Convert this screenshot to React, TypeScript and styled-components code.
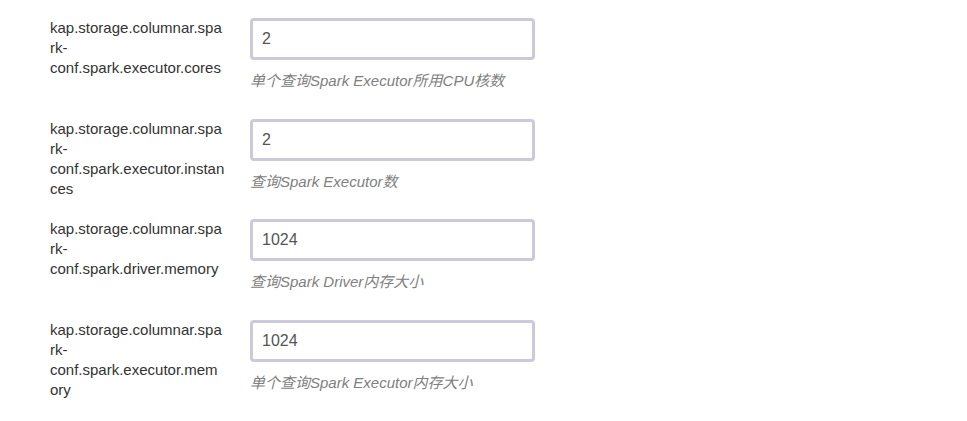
import React from "react";
import styled, { createGlobalStyle } from "styled-components";

const Global = createGlobalStyle`
  html, body { margin: 0; padding: 0; background: #fff; }
  body { font-family: "Liberation Sans", Arial, sans-serif; }
`;

const Form = styled.div`
  display: flex;
  flex-direction: column;
  padding: 18px 0 0 50px;
`;

const Row = styled.div`
  display: flex;
  align-items: flex-start;
  height: 100.5px;
`;

const Label = styled.div`
  width: 175px;
  margin-right: 25px;
  font-size: 15px;
  line-height: 20px;
  color: #333;
  word-break: break-all;
`;

const Field = styled.div`
  display: flex;
  flex-direction: column;
`;

const Input = styled.input`
  box-sizing: border-box;
  width: 285px;
  height: 42px;
  border: 3px solid #cbc9da;
  border-radius: 4px;
  padding: 0 9px;
  font-family: "Liberation Sans", Arial, sans-serif;
  font-size: 16px;
  color: #555;
  outline: none;
  background: #fff;
`;

const Help = styled.div`
  margin-top: 11px;
  font-size: 15px;
  line-height: 20px;
  font-style: italic;
  color: #808080;
  font-family: "Liberation Sans", Arial, "Noto Sans CJK SC", sans-serif;
`;

const rows = [
  { label: "kap.storage.columnar.spark-conf.spark.executor.cores", value: "2", help: "单个查询Spark Executor所用CPU核数" },
  { label: "kap.storage.columnar.spark-conf.spark.executor.instances", value: "2", help: "查询Spark Executor数" },
  { label: "kap.storage.columnar.spark-conf.spark.driver.memory", value: "1024", help: "查询Spark Driver内存大小" },
  { label: "kap.storage.columnar.spark-conf.spark.executor.memory", value: "1024", help: "单个查询Spark Executor内存大小" },
];

function renderLabel(l: string) {
  const i = l.indexOf("-");
  return (
    <>
      {l.slice(0, i + 1)}
      <br />
      {l.slice(i + 1)}
    </>
  );
}

export default function App() {
  return (
    <>
      <Global />
      <Form>
        {rows.map((r, idx) => (
          <Row key={idx}>
            <Label>{renderLabel(r.label)}</Label>
            <Field>
              <Input defaultValue={r.value} />
              <Help>{r.help}</Help>
            </Field>
          </Row>
        ))}
      </Form>
    </>
  );
}
